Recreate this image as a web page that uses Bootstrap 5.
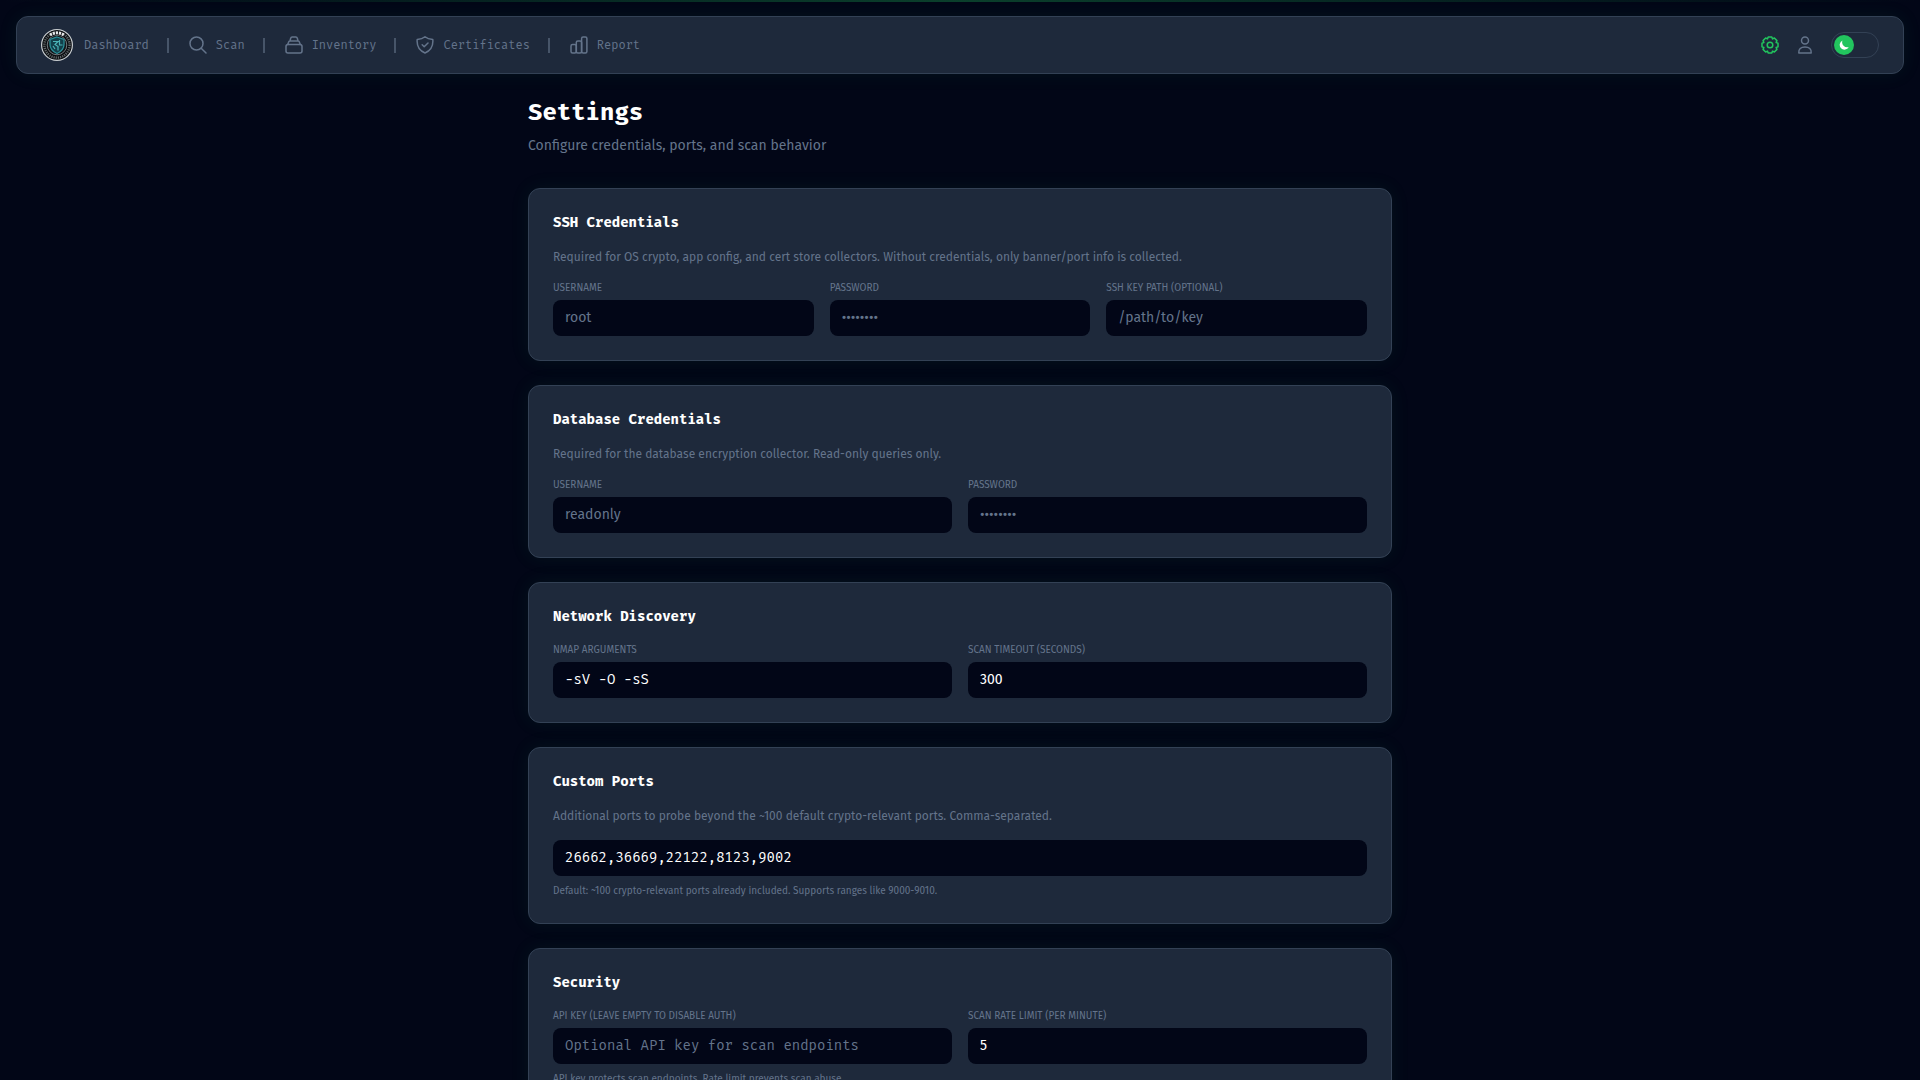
<!DOCTYPE html>
<html lang="en">
<head>
<meta charset="utf-8">
<meta name="viewport" content="width=device-width, initial-scale=1">
<title>Settings</title>
<link href="https://cdn.jsdelivr.net/npm/bootstrap@5.3.0/dist/css/bootstrap.min.css" rel="stylesheet">
<style>
:root{--page:#020617;--panel:#1e293b;--line:#334155;--muted:#64748b;--accent:#22c55e;
--mono:"Fira Mono","Fira Code","DejaVu Sans Mono",monospace;--sans:"Fira Sans",Roboto,sans-serif}
body{background:var(--page);color:#fff;font-family:var(--sans);overflow-x:hidden}
.top-glow{height:2px;background:linear-gradient(90deg,transparent,#22c55e4d,transparent)}
.panel{background:var(--panel);border:1px solid var(--line);border-radius:12px;box-shadow:0 0 20px rgba(34,197,94,.08)}
.topbar{margin:14px 16px 22px;padding:12px 24px}
.topbar a{color:var(--muted);font:12px/18px var(--mono);text-decoration:none}
.topbar svg{display:block}
.brand{margin-right:11px}
.nav-icon{margin-right:9px}
.tools{gap:17px}
.divider{width:2px;height:15px;margin:0 20px 0 18px;background:#475569}
.stroke{fill:none;stroke:currentColor;stroke-width:1.5;stroke-linecap:round;stroke-linejoin:round}
.topbar a.active{color:var(--accent)}
.theme{width:48px;height:26px;padding:2px;border:1px solid var(--line);border-radius:13px;background:transparent}
.knob{width:20px;height:20px;border-radius:50%;background:var(--accent)}
.page{max-width:896px;padding:0 16px 24px}
h1{font:700 24px/32px var(--mono);margin:0 0 8px}
.intro{font-size:14px;line-height:20px;color:var(--muted);margin:0 0 32px}
.block{padding:24px;margin-bottom:24px}
h2{font:700 14px/20px var(--mono);margin:0 0 16px}
.note{font-size:12px;line-height:16px;color:var(--muted);margin:0 0 16px}
.cap{display:block;font-size:10px;line-height:15px;color:var(--muted);text-transform:uppercase;margin:0 0 4px}
.hint{font-size:10px;line-height:15px;color:var(--muted);margin:8px 0 0}
.block .form-control{height:36px;padding:7px 12px 9px;font-size:14px;line-height:20px;color:#fff;background:var(--page);border:0;border-radius:8px}
.block .form-control::placeholder{color:var(--muted);opacity:1}
.block .code-input{font-family:var(--mono)}
</style>
</head>
<body>
<div class="top-glow"></div>
<nav class="panel topbar d-flex align-items-center justify-content-between" aria-label="Main">
  <div class="d-flex align-items-center">
    <a href="#" class="d-flex align-items-center">
      <svg class="brand" width="32" height="32" viewBox="0 0 32 32" aria-hidden="true">
        <circle cx="16" cy="16" r="15.4" fill="#0b0d10" stroke="#c9ced1" stroke-width="1.2"/>
        <circle cx="16" cy="16" r="12.6" fill="none" stroke="#9aa1a4" stroke-width="2.4" stroke-dasharray="1.2 1" opacity=".6"/>
        <circle cx="16" cy="16" r="9.8" fill="#101418" stroke="#8b9295" stroke-width=".8"/>
        <path d="M9 5.800Q16 1.500 23 5.800" fill="none" stroke="#0b0d10" stroke-width="4.500"/>
        <path d="M9 6Q16 1.700 23 6" fill="none" stroke="#e5e7e8" stroke-width="3" stroke-dasharray="2.200 .9"/>
        <path d="M16 8l7 2.500v5c0 4-3 7.200-7 9-4-1.800-7-5-7-9v-5z" fill="#123f4a" stroke="#2a8f98" stroke-width="1.300"/>
        <path d="M12 12.500h5l-3 3 3 2v4M18.500 11v5h3M12 17l2 3" fill="none" stroke="#4bb3b6" stroke-width="1.200"/>
      </svg>Dashboard</a>
    <span class="divider"></span>
    <a href="#" class="d-flex align-items-center">
      <svg class="stroke nav-icon" width="18" height="18" viewBox="1 1 18 18" aria-hidden="true"><circle cx="8.500" cy="8.500" r="6.500"/><path d="M13.200 13.200l4.800 4.800"/></svg>Scan</a>
    <span class="divider"></span>
    <a href="#" class="d-flex align-items-center">
      <svg class="stroke nav-icon" width="18" height="18" viewBox="1 1 18 18" aria-hidden="true"><rect x="2" y="9.500" width="16" height="8.500" rx="2"/><path d="M3.800 9.500l.6-2Q4.800 6 6 6h8q1.200 0 1.600 1.500l.6 2M6 6l.6-2.500Q7 2 8.200 2h3.600Q13 2 13.400 3.500L14 6"/></svg>Inventory</a>
    <span class="divider"></span>
    <a href="#" class="d-flex align-items-center">
      <svg class="stroke nav-icon" width="18" height="18" viewBox="1 1 18 18" aria-hidden="true"><path d="M10 1.800C8 3.500 5 4.300 2.200 4.500c-.5 5.500 1.500 11 7.800 13.500 6.300-2.500 8.300-8 7.800-13.500C15 4.300 12 3.500 10 1.800zM7.200 9.800l2 2 3.800-3.800"/></svg>Certificates</a>
    <span class="divider"></span>
    <a href="#" class="d-flex align-items-center">
      <svg class="stroke nav-icon" width="18" height="18" viewBox="1 1 18 18" aria-hidden="true"><rect x="2" y="9.500" width="5.300" height="8.500" rx="1.500"/><rect x="7.300" y="6" width="5.300" height="12" rx="1.500"/><rect x="12.600" y="2" width="5.300" height="16" rx="1.500"/></svg>Report</a>
  </div>
  <div class="tools d-flex align-items-center">
    <a href="#" class="active" aria-label="Settings"><svg class="stroke" width="18" height="18" viewBox="1 1 18 18" aria-hidden="true"><path d="M18 8.160v3.680L16.100 12.530 16.950 14.350 14.350 16.950 12.530 16.100 11.840 18H8.160L7.470 16.100 5.650 16.950 3.050 14.350 3.900 12.530 2 11.840V8.160L3.900 7.470 3.050 5.650 5.650 3.050 7.470 3.900 8.160 2h3.680L12.530 3.900 14.350 3.050 16.950 5.650 16.100 7.470z"/><circle cx="10" cy="10" r="2.800"/></svg></a>
    <a href="#" aria-label="Account"><svg class="stroke" width="18" height="18" viewBox="1 1 18 18" aria-hidden="true"><circle cx="10" cy="5.500" r="3.500"/><path d="M3.800 18c-.4-4 2-6 6.200-6s6.600 2 6.200 6z"/></svg></a>
    <button type="button" class="theme" role="switch" aria-checked="true" aria-label="Dark theme"><span class="knob d-flex align-items-center justify-content-center"><svg width="12" height="12" viewBox="0 0 12 12" aria-hidden="true"><path d="M4.500 1.500A4.800 4.800 0 1 0 10.800 8 5 5 0 0 1 4.500 1.500z" fill="#fff"/></svg></span></button>
  </div>
</nav>
<main class="page container-fluid">
  <h1>Settings</h1>
  <p class="intro">Configure credentials, ports, and scan behavior</p>
  <section class="panel block">
    <h2>SSH Credentials</h2>
    <p class="note">Required for OS crypto, app config, and cert store collectors. Without credentials, only banner/port info is collected.</p>
    <div class="row gx-3">
      <div class="col"><label class="cap" for="ssh-user">Username</label><input class="form-control" id="ssh-user" type="text" placeholder="root"></div>
      <div class="col"><label class="cap" for="ssh-pass">Password</label><input class="form-control" id="ssh-pass" type="password" placeholder="••••••••"></div>
      <div class="col"><label class="cap" for="ssh-key">SSH Key Path (optional)</label><input class="form-control" id="ssh-key" type="text" placeholder="/path/to/key"></div>
    </div>
  </section>
  <section class="panel block">
    <h2>Database Credentials</h2>
    <p class="note">Required for the database encryption collector. Read-only queries only.</p>
    <div class="row gx-3">
      <div class="col"><label class="cap" for="db-user">Username</label><input class="form-control" id="db-user" type="text" placeholder="readonly"></div>
      <div class="col"><label class="cap" for="db-pass">Password</label><input class="form-control" id="db-pass" type="password" placeholder="••••••••"></div>
    </div>
  </section>
  <section class="panel block">
    <h2>Network Discovery</h2>
    <div class="row gx-3">
      <div class="col"><label class="cap" for="nmap">Nmap Arguments</label><input class="form-control code-input" id="nmap" type="text" value="-sV -O -sS"></div>
      <div class="col"><label class="cap" for="timeout">Scan Timeout (seconds)</label><input class="form-control" id="timeout" type="text" inputmode="numeric" value="300"></div>
    </div>
  </section>
  <section class="panel block">
    <h2 id="ports-title">Custom Ports</h2>
    <p class="note">Additional ports to probe beyond the ~100 default crypto-relevant ports. Comma-separated.</p>
    <input class="form-control code-input" type="text" aria-labelledby="ports-title" value="26662,36669,22122,8123,9002">
    <p class="hint">Default: ~100 crypto-relevant ports already included. Supports ranges like 9000-9010.</p>
  </section>
  <section class="panel block">
    <h2>Security</h2>
    <div class="row gx-3">
      <div class="col"><label class="cap" for="api">API Key (leave empty to disable auth)</label><input class="form-control code-input" id="api" type="text" placeholder="Optional API key for scan endpoints"></div>
      <div class="col"><label class="cap" for="rate">Scan Rate Limit (per minute)</label><input class="form-control" id="rate" type="text" inputmode="numeric" value="5"></div>
    </div>
    <p class="hint">API key protects scan endpoints. Rate limit prevents scan abuse.</p>
  </section>
</main>
<script src="https://cdn.jsdelivr.net/npm/bootstrap@5.3.0/dist/js/bootstrap.bundle.min.js"></script>
</body>
</html>
